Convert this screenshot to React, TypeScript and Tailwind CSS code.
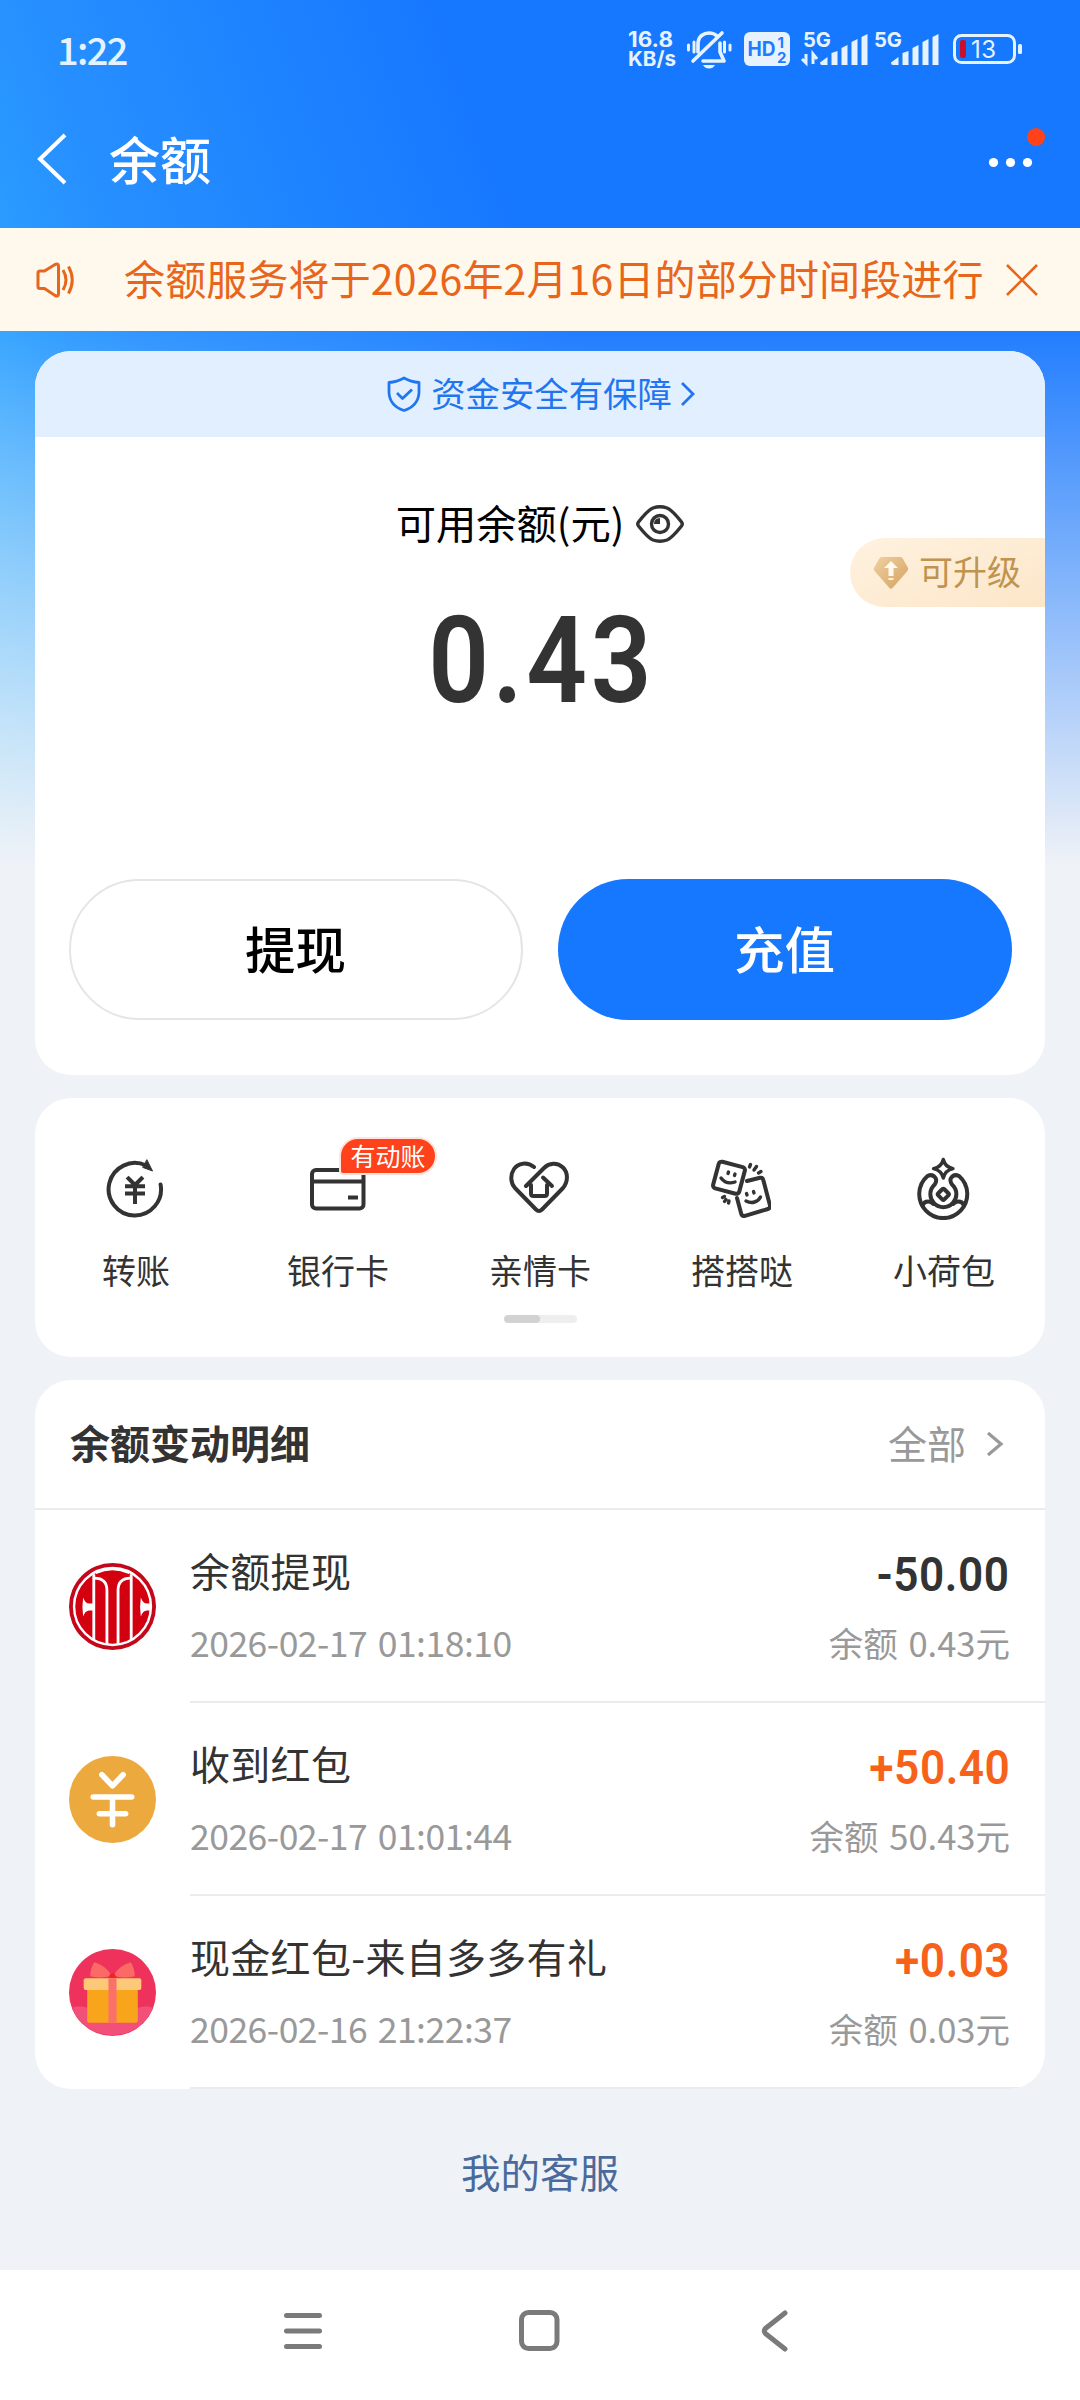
import type { ReactNode } from "react";

const actions = [
  { label: "转账", icon: <TransferIcon /> },
  { label: "银行卡", icon: <BankCardIcon />, badge: "有动账" },
  { label: "亲情卡", icon: <FamilyIcon /> },
  { label: "搭搭哒", icon: <BuddyIcon /> },
  { label: "小荷包", icon: <PurseIcon /> },
];

const records = [
  {
    title: "余额提现",
    time: "2026-02-17 01:18:10",
    amount: "-50.00",
    balance: "0.43",
    color: "text-[#333333]",
    icon: <CiticLogo />,
  },
  {
    title: "收到红包",
    time: "2026-02-17 01:01:44",
    amount: "+50.40",
    balance: "50.43",
    color: "text-[#f7621a]",
    icon: <CoinIcon />,
  },
  {
    title: "现金红包-来自多多有礼",
    time: "2026-02-16 21:22:37",
    amount: "+0.03",
    balance: "0.03",
    color: "text-[#f7621a]",
    icon: <GiftIcon />,
  },
];

export default function App() {
  return (
    <div className="flex h-[2400px] w-[1080px] flex-col overflow-hidden whitespace-nowrap bg-[#eff2f7] bg-[linear-gradient(180deg,rgba(239,242,247,0)_300px,#eff2f7_865px),linear-gradient(70deg,#45bdff_0%,#2a9bff_17%,#2790ff_24%,#1677ff_55%)] bg-[length:1080px_865px] bg-no-repeat font-['Noto_Sans_CJK_SC',sans-serif]">
      <StatusBar />
      <Header />
      <Notice />
      <main className="flex grow flex-col px-[35px] pt-5">
        <BalanceCard />
        <Actions />
        <Records />
        <a className="mt-[60px] self-center text-[39.5px] leading-[44px] text-[#4a6a9c]">
          我的客服
        </a>
      </main>
      <NavBar />
    </div>
  );
}

function StatusBar() {
  return (
    <div className="flex h-[98px] items-center justify-between pr-[58px] pl-[57px] text-[#e6f3ff]">
      <span className="text-[38px] leading-none font-medium tracking-[-1.6px]">1:22</span>
      <svg width="400" height="60" viewBox="622 20 400 60" fill="currentColor">
        <g fontFamily="Inter, sans-serif" fontWeight="700">
          <text x="628" y="48" fontSize="21" textLength="45" lengthAdjust="spacingAndGlyphs">16.8</text>
          <text x="628" y="67" fontSize="20.500" textLength="48" lengthAdjust="spacingAndGlyphs">KB/s</text>
          <text x="803" y="48" fontSize="20.500" textLength="28" lengthAdjust="spacingAndGlyphs">5G</text>
          <text x="874" y="48" fontSize="20.500" textLength="28" lengthAdjust="spacingAndGlyphs">5G</text>
        </g>
        {/* muted bell */}
        <g fill="none" stroke="currentColor" strokeWidth="3.6" strokeLinecap="round" strokeLinejoin="round">
          <path d="M698 53V45C698 37 704 34 709 34C712 34 715 35 717 37" />
          <path d="M720 44V53L724 62H703M693 62L722 34" />
          <path d="M694 43V53M688.500 46V51M724.500 43V53M730 46V51" strokeWidth="3" />
        </g>
        <path d="M703 66H715Q713 69.500 709 69.500T703 66Z" />
        <rect x="744" y="33" width="46" height="34" rx="6" />
        <g fill="#1f7bff" fontFamily="Inter, sans-serif" fontWeight="700">
          <text x="747.500" y="57" fontSize="20" textLength="28" lengthAdjust="spacingAndGlyphs">HD</text>
          <text x="777.500" y="48.500" fontSize="15">1</text>
          <text x="777" y="63.500" fontSize="15">2</text>
        </g>
        <path d="M806 55V64L802 60M813 65V55L817 60" fill="none" stroke="currentColor" strokeWidth="3" />
        <SignalBars x={820} />
        <SignalBars x={891} />
        <rect x="954.500" y="36.500" width="60" height="27" rx="7" fill="none" stroke="currentColor" strokeWidth="3" />
        <rect x="1018" y="45" width="4" height="10" rx="1.500" />
        <rect x="960" y="41" width="6" height="18" rx="2" fill="#c8102e" />
        <text x="971" y="59" fontSize="24" fontFamily="Inter, sans-serif" textLength="25">13</text>
      </svg>
    </div>
  );
}

function SignalBars({ x }: { x: number }) {
  return (
    <g transform={`translate(${x} 0)`}>
      <path d="M0 63.500L7.500 58V66H2Q0 66 0 63.500Z" />
      <path d="M11.500 54L17.500 52V66H11.500Z" />
      <path d="M21.500 49L27.500 46V66H21.500Z" />
      <path d="M31.500 43L37.500 40V66H31.500Z" />
      <path d="M41.500 38L47.500 35V66H41.500Z" />
    </g>
  );
}

function Header() {
  return (
    <header className="flex h-[130px] items-start justify-between pr-[32px] pl-[36px] text-white">
      <div className="flex h-[122px] items-center">
        <svg width="32" height="52" viewBox="0 0 32 52" fill="none" stroke="currentColor" strokeWidth="4">
          <path d="M29 2L4 26L29 50" />
        </svg>
        <h1 className="ml-[41px] pb-0.5 text-[51px] leading-none font-medium">余额</h1>
      </div>
      <svg className="mt-7" width="60" height="50" viewBox="988 126 60 50" fill="currentColor">
        <circle cx="993.500" cy="162.500" r="4.600" />
        <circle cx="1010.500" cy="162.500" r="4.600" />
        <circle cx="1027.500" cy="162.500" r="4.600" />
        <circle cx="1036" cy="137" r="9" fill="#ff4219" />
      </svg>
    </header>
  );
}

function Notice() {
  return (
    <div className="flex h-[103px] items-center bg-[#fff8ec] pr-[41px] pl-[35px] text-[#e8651c]">
      <svg width="40" height="40" viewBox="0 0 40 40" fill="none" stroke="currentColor" strokeWidth="3">
        <path d="M3 13Q3 11 5 11H9.500L20 4.500Q23.500 3 23.500 6V34Q23.500 37 20 35.500L9.500 28.500H5Q3 28.500 3 26.500Z" />
        <path d="M28 10Q34 20 28 30M33.500 6.500Q41 20 33.500 33.500" />
      </svg>
      <p className="ml-[49px] w-[859px] pb-1.5 text-[41px] leading-[52px] tracking-[0.14px]">
        余额服务将于2026年2月16日的部分时间段进行
      </p>
      <svg className="ml-[22px] shrink-0" width="34" height="32" viewBox="0 0 34 32" fill="none" stroke="currentColor" strokeWidth="2.600">
        <path d="M2 1L32 31M32 1L2 31" />
      </svg>
    </div>
  );
}

function BalanceCard() {
  return (
    <section className="relative flex h-[724px] shrink-0 flex-col items-center overflow-hidden rounded-[36px] bg-white">
      <div className="flex h-[86px] w-full items-center justify-center bg-[#e2efff] text-[#1f76f0]">
        <svg className="ml-0.5" width="34" height="36" viewBox="0 0 34 36" fill="none" stroke="currentColor" strokeWidth="2.800" strokeLinejoin="round">
          <path d="M17 2Q24 6 32 6.500V17Q31 30 17 34.500Q3 30 2 17V6.500Q10 6 17 2Z" />
          <path d="M10 17L15.500 22.500L25 13.500" />
        </svg>
        <span className="ml-2.5 pb-1 text-[34.4px] leading-none">资金安全有保障</span>
        <svg className="ml-2" width="15" height="26" viewBox="0 0 15 26" fill="none" stroke="currentColor" strokeWidth="2.800">
          <path d="M2 2L13 13L2 24" />
        </svg>
      </div>
      <div className="mt-[63px] flex h-[48px] items-center">
        <span className="pb-1 text-[40.3px] leading-none text-black">可用余额(元)</span>
        <svg className="ml-3" width="48" height="38" viewBox="0 0 48 38" fill="none" stroke="#333" strokeWidth="3.400">
          <path d="M2.500 17Q12 5 17 3Q24 0.500 31 3Q36 5 45.500 17Q47 19 45.500 21Q36 33 31 35Q24 37.500 17 35Q12 33 2.500 21Q1 19 2.500 17Z" />
          <circle cx="24" cy="19" r="8.500" />
          <path d="M24 13V19H18Q18 13 24 13Z" fill="#333" stroke="none" />
        </svg>
      </div>
      <div className="mt-[58px] scale-x-[0.88] pl-[4px] font-[Roboto,sans-serif] text-[121px] leading-[110px] font-semibold tracking-[4px] text-[#333333]">
        0.43
      </div>
      <div className="mt-auto mb-[55px] flex gap-[35px] text-[50.5px] leading-none font-medium">
        <button className="h-[141px] w-[454px] rounded-full border-2 border-[#e5e5e5] pb-1 text-black">提现</button>
        <button className="h-[141px] w-[454px] rounded-full bg-[#1677ff] pb-1 text-white">充值</button>
      </div>
      <div className="absolute top-[187px] right-0 flex h-[69px] w-[195px] items-center rounded-l-full bg-linear-to-br from-[#fff2e0] to-[#fce6c8] pl-[23px] text-[#bf9350]">
        <svg width="36" height="34" viewBox="0 0 36 34">
          <defs>
            <linearGradient id="gem" x1="0" y1="0" x2="1" y2="1">
              <stop offset="0" stopColor="#efd0a2" />
              <stop offset="1" stopColor="#d5a260" />
            </linearGradient>
          </defs>
          <path d="M9 1H27Q29 1 30 3L34.500 11Q36 13 34 15.500L20 31.500Q18 34 16 31.500L2 15.500Q0 13 1.500 11L6 3Q7 1 9 1Z" fill="url(#gem)" />
          <path d="M18 5L25 12H20.500V20H15.500V12H11Z" fill="#fff8ec" />
          <path d="M15.500 23H20.500" stroke="#fff0d8" strokeWidth="2" />
        </svg>
        <span className="ml-2.5 pb-1 text-[34px] leading-none">可升级</span>
      </div>
    </section>
  );
}

function Actions() {
  return (
    <section className="mt-[23px] flex h-[259px] shrink-0 flex-col items-center rounded-[36px] bg-white">
      <div className="flex w-full pt-[58px]">
        {actions.map((item) => (
          <div key={item.label} className="relative flex w-[202px] flex-col items-center">
            {item.icon}
            <span className="mt-[31px] text-[34px] leading-[38px] text-[#333333]">{item.label}</span>
            {item.badge && (
              <span className="absolute -top-[19px] left-[102px] flex h-[38px] w-[98px] items-center justify-center rounded-[19px] rounded-bl-[4px] border-2 border-[#ffe3dc] bg-[#ff411c] pb-0.5 text-[25px] leading-none text-white">
                {item.badge}
              </span>
            )}
          </div>
        ))}
      </div>
      <div className="mt-[26px] h-2 w-[73px] overflow-hidden rounded-full bg-[#eeeeee]">
        <div className="h-full w-1/2 rounded-full bg-[#d2d2d2]" />
      </div>
    </section>
  );
}

function Records() {
  return (
    <section className="mt-[23px] h-[709px] shrink-0 overflow-hidden rounded-[36px] bg-white">
      <div className="flex h-[130px] items-center justify-between border-b-2 border-[#ebebeb] pr-[41px] pb-1 pl-[35px]">
        <h2 className="text-[40px] leading-none font-bold text-[#333333]">余额变动明细</h2>
        <div className="flex items-center text-[39px] leading-none text-[#999999]">
          全部
          <svg className="mt-1 ml-5" width="18" height="26" viewBox="0 0 18 26" fill="none" stroke="currentColor" strokeWidth="3.200">
            <path d="M2 2L15 13L2 24" />
          </svg>
        </div>
      </div>
      {records.map((item) => (
        <div key={item.time} className="flex h-[193px] items-center pl-[34px]">
          {item.icon}
          <div className="ml-[34px] flex h-full grow justify-between border-b-2 border-[#ebebeb] pt-[38px] pr-[35px]">
            <div className="flex flex-col">
              <span className="text-[40px] leading-[44px] tracking-[0.3px] text-[#333333]">{item.title}</span>
              <span className="mt-[31px] text-[35.5px] leading-[38px] tracking-[-0.5px] text-[#999999] [word-spacing:3px]">
                {item.time}
              </span>
            </div>
            <div className="flex flex-col items-end">
              <span className={`origin-right scale-x-[0.92] font-[Roboto,sans-serif] text-[48px] leading-[53px] font-semibold tracking-[0.6px] ${item.color}`}>
                {item.amount}
              </span>
              <span className="mt-[22px] text-[34.5px] leading-[38px] text-[#999999] [word-spacing:3px]">余额 {item.balance}元</span>
            </div>
          </div>
        </div>
      ))}
    </section>
  );
}

function NavBar() {
  return (
    <nav className="h-[130px] shrink-0 bg-white pt-[38px] pl-[282px]">
      <svg width="510" height="46" viewBox="282 2308 510 46" fill="none" stroke="#7a7a7a" strokeWidth="5" strokeLinecap="round" strokeLinejoin="round">
        <path d="M286.500 2315.500H319.500M286.500 2331H319.500M286.500 2346.500H319.500" />
        <rect x="521.500" y="2312.500" width="35.500" height="36" rx="7" />
        <path d="M785 2313L766 2328Q762.500 2331 766 2334L785 2349" />
      </svg>
    </nav>
  );
}

function LineIcon({ children }: { children: ReactNode }) {
  return (
    <svg className="-translate-x-px" width="60" height="64" viewBox="0 0 60 64" fill="none" stroke="#333" strokeWidth="4" strokeLinecap="round" strokeLinejoin="round">
      {children}
    </svg>
  );
}

function TransferIcon() {
  return (
    <LineIcon>
      <path d="M55.600 28.500A26.200 26.200 0 1 1 41 9.500" />
      <path d="M42 4L47.500 15L38 11.500Z" fill="#333" strokeWidth="1" />
      <path d="M23.500 22.500L30 29L36.500 22.500M22 30.300H38M22 37.500H38M30 30V46" strokeLinecap="square" />
    </LineIcon>
  );
}

function BankCardIcon() {
  return (
    <LineIcon>
      <rect x="5" y="14" width="51.500" height="38.500" rx="4" />
      <path d="M5 25.500H56M43 41.500H49" strokeLinecap="square" />
    </LineIcon>
  );
}

function FamilyIcon() {
  return (
    <LineIcon>
      <path d="M25 11C18 5.500 9 7 5 13C1 19 1.500 27 6 32L27 53.500Q30 56.500 33 53.500L54 32C59 26 59.500 17 54 11.500C48 6 40 7 35 12L17 30" />
      <path d="M22 29V37.500Q22 40 24.500 40H35.500Q38 40 38 37.500V29M34 21.500L43 30" />
    </LineIcon>
  );
}

function BuddyIcon() {
  return (
    <LineIcon>
      <rect x="4.500" y="8" width="27" height="27.500" rx="3" transform="rotate(15 18 21.700)" />
      <path d="M36 25L49 21.800Q51.700 21.300 52.300 24L59 49.500Q59.300 52 57 53L34 59.800Q31 60.500 30.300 58L26 42" />
      <g strokeWidth="3.400">
        <path d="M10 22C13 26 18 28 24 26M17.500 16L17 17.500M24 18L23.500 19.500" />
        <path d="M35 45C41 48 47 46 49.500 41M35.500 37.500L36 39M42.500 35.500L43 37" />
        <path d="M39.500 8.500L38.500 11M45.500 10.500L43 14M50 15.500L47.500 17M11.500 41.500L13.500 40.500M13.500 45.500L15 43.500M17.500 47L18 45" />
      </g>
    </LineIcon>
  );
}

function PurseIcon() {
  return (
    <LineIcon>
      <path d="M21.700 28.500Q24.200 25 22.500 22Q19.500 17.500 14.500 20A24 24 0 1 0 46 20Q41 17.500 38 22Q36.500 25 39 28.500A13 13 0 1 1 21.700 28.500Z" />
      <path d="M9.500 49.500Q11 45.500 15 45.500Q18 45.500 20.500 48M51 49.500Q49.500 45.500 45.500 45.500Q42.500 45.500 40 48" />
      <rect x="26" y="34" width="8.600" height="8.600" rx="1.500" transform="rotate(45 30.300 38.300)" />
      <path d="M30.300 3.500Q32 11 40 12.700Q32 14.500 30.300 22Q28.500 14.500 20.500 12.700Q28.500 11 30.300 3.500Z" strokeWidth="3.400" />
    </LineIcon>
  );
}

function CiticLogo() {
  return (
    <svg width="87" height="87" viewBox="0 0 86 86" fill="none">
      <circle cx="43" cy="43" r="43" fill="#c4081c" />
      <circle cx="43" cy="43" r="38" fill="#d3000f" stroke="#fff" strokeWidth="2.400" />
      <g stroke="#fff" strokeWidth="2.800">
        <path d="M24.500 11V76M61.500 11V76" />
        <path d="M25 15C33 15 37.500 19 37.500 27V80M61 15C53 15 48.500 19 48.500 27V80" />
      </g>
      <path d="M26.500 10Q43 2.500 59.500 10" stroke="#fff" strokeWidth="2" />
      <path d="M14 34Q16 40 20 40H24V47H20Q16 47 14 53Q12.500 43 14 34ZM71 34Q73 40 77 40H81V47H77Q73 47 71 53Q69.500 43 71 34Z" fill="#fff" />
    </svg>
  );
}

function CoinIcon() {
  return (
    <svg width="87" height="87" viewBox="0 0 86 86" fill="none" stroke="#fff" strokeWidth="5.500" strokeLinecap="round" strokeLinejoin="round">
      <circle cx="43" cy="43" r="43" fill="#eca93e" stroke="none" />
      <path d="M32.500 18.500L43 29.500L53.500 18.500M24 40.500H62M30 57H56M43 41V68" />
    </svg>
  );
}

function GiftIcon() {
  return (
    <svg width="87" height="87" viewBox="0 0 86 86">
      <circle cx="43" cy="43" r="43" fill="#ee325b" />
      <path d="M3 58Q10 55 18 58L43 66L68 58Q76 55 83 58A43 43 0 0 1 3 58Z" fill="#f25078" />
      <path d="M25 13Q36 16 42 26Q34 30 21 27Q21 19 25 13ZM61 13Q50 16 44 26Q52 30 65 27Q65 19 61 13Z" fill="#fb6a64" />
      <circle cx="43" cy="27" r="3" fill="#f0251f" />
      <rect x="18" y="38" width="50" height="35" rx="2" fill="#f9a51b" />
      <rect x="14.500" y="29" width="57" height="11.500" rx="2" fill="#fdc878" />
      <path d="M39 29H47V73H39Z" fill="#fb7068" />
    </svg>
  );
}
